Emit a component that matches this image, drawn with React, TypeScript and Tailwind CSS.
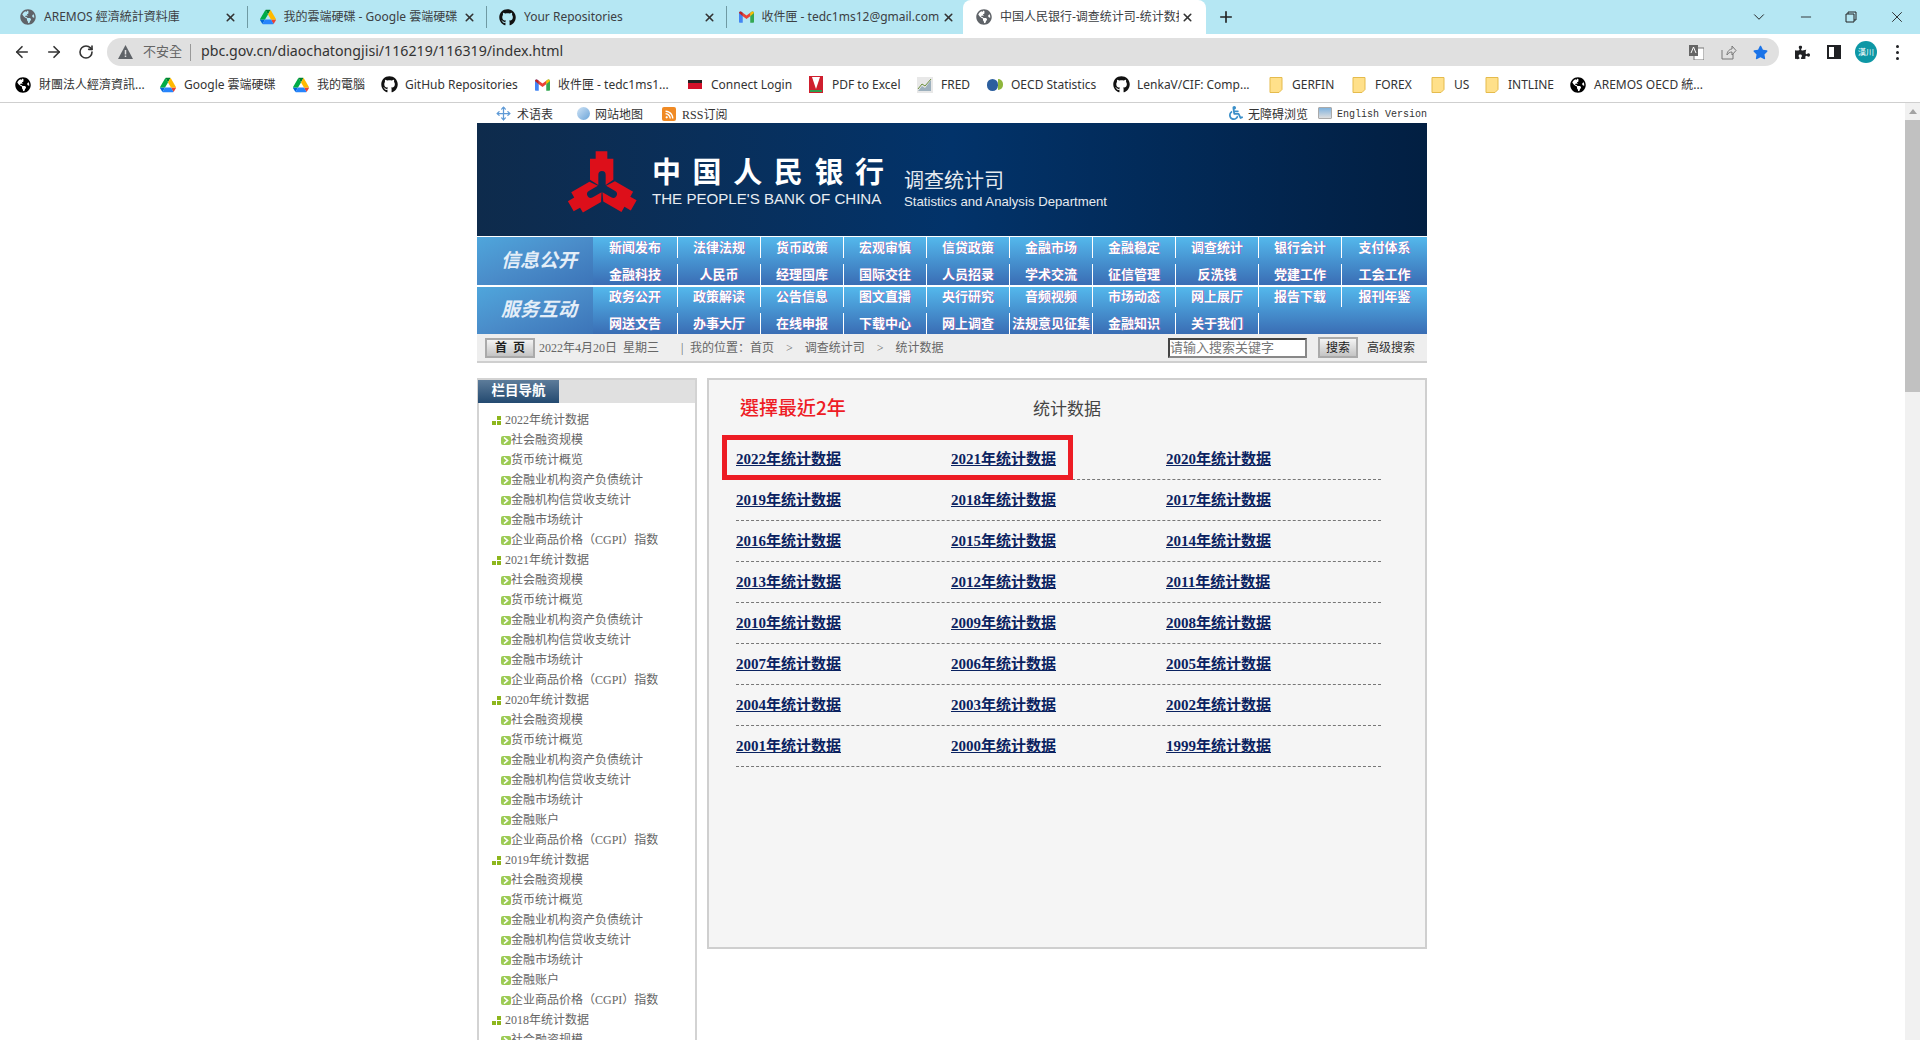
import { ArrowLeft, ArrowRight, RotateCw, ChevronDown, Minus, X, Plus, Move } from 'lucide-react'
import { FaGithub, FaGlobeAmericas, FaPuzzlePiece, FaRss, FaStar, FaWheelchair } from 'react-icons/fa'

const CHROME = "[font-family:'Noto_Sans','Noto_Sans_CJK_TC',sans-serif]"
const PAGE = "[font-family:'Liberation_Serif','Noto_Sans_CJK_SC',serif]"
const ARIAL = "[font-family:'Liberation_Sans','Noto_Sans_CJK_SC',sans-serif]"

function Drive({ size = 16 }: { size?: number }) {
  return (
    <svg width={size} height={size} viewBox="0 0 87.3 78" className="shrink-0">
      <path d="m6.6 66.85 3.85 6.65c.8 1.4 1.95 2.5 3.3 3.3l13.75-23.8h-27.5c0 1.55.4 3.1 1.2 4.5z" fill="#0066da" />
      <path d="m43.65 25-13.75-23.8c-1.35.8-2.5 1.9-3.3 3.3l-25.4 44a9.06 9.06 0 0 0 -1.2 4.5h27.5z" fill="#00ac47" />
      <path d="m73.55 76.8c1.35-.8 2.5-1.9 3.3-3.3l1.6-2.75 7.65-13.25c.8-1.4 1.2-2.95 1.2-4.5h-27.502l5.852 11.5z" fill="#ea4335" />
      <path d="m43.65 25 13.75-23.8c-1.35-.8-2.9-1.2-4.5-1.2h-18.5c-1.6 0-3.15.45-4.5 1.2z" fill="#00832d" />
      <path d="m59.8 53h-32.3l-13.75 23.8c1.35.8 2.9 1.2 4.5 1.2h50.8c1.6 0 3.15-.45 4.5-1.2z" fill="#2684fc" />
      <path d="m73.4 26.5-12.7-22c-.8-1.4-1.95-2.5-3.3-3.3l-13.75 23.8 16.15 28h27.45c0-1.55-.4-3.1-1.2-4.5z" fill="#ffba00" />
    </svg>
  )
}

function Gmail() {
  return (
    <svg width="15" height="12" viewBox="0 0 24 18" className="shrink-0">
      <path d="M0 2.5C0 .5 2.2-.6 3.8.6L6 2.2V18H1.6C.7 18 0 17.3 0 16.4z" fill="#4285f4" />
      <path d="M24 2.5c0-2-2.2-3.1-3.8-1.9L18 2.2V18h4.4c.9 0 1.6-.7 1.6-1.6z" fill="#34a853" />
      <path d="M6 2.2 12 6.7l6-4.5v5.6l-6 4.5-6-4.5z" fill="#ea4335" />
      <path d="M0 2.5 6 7.8V2.2L3.8.6C2.2-.6 0 .5 0 2.5z" fill="#c5221f" />
      <path d="M24 2.5 18 7.8V2.2L20.2.6C21.8-.6 24 .5 24 2.5z" fill="#fbbc04" />
    </svg>
  )
}

function Folder() {
  return (
    <svg width="14" height="16" viewBox="0 0 14 16" className="shrink-0">
      <path d="M1 .5h8l4 0v12l-3 3H1z" fill="#ffe08a" stroke="#e5bb4c" />
    </svg>
  )
}

function Tab({ icon, title }: { icon: React.ReactNode; title: string }) {
  return (
    <div className="flex w-[239.5px] h-[34px] items-center pl-3 pr-[10px] border-r border-[#6f9aa3] [border-image:linear-gradient(transparent_20%,#6f9aa3_20%,#6f9aa3_80%,transparent_80%)_1]">
      {icon}
      <span className="ml-2 flex-1 overflow-hidden whitespace-nowrap text-xs text-[#3c4043]">{title}</span>
      <X size={13} strokeWidth={3} className="ml-[2px] shrink-0 text-[#333]" />
    </div>
  )
}

const bookmarks: { w: string; icon: React.ReactNode; label: string }[] = [
  { w: 'w-[145px]', icon: <FaGlobeAmericas size={16} className="shrink-0 text-black" />, label: '財團法人經濟資訊...' },
  { w: 'w-[133px]', icon: <Drive />, label: 'Google 雲端硬碟' },
  { w: 'w-[88px]', icon: <Drive />, label: '我的電腦' },
  { w: 'w-[153px]', icon: <FaGithub size={17} className="shrink-0 text-[#111]" />, label: 'GitHub Repositories' },
  { w: 'w-[153px]', icon: <Gmail />, label: '收件匣 - tedc1ms1...' },
  {
    w: 'w-[121px]',
    icon: (
      <span className="flex w-[14px] shrink-0 flex-col">
        <span className="h-[3px] bg-[#222]" />
        <span className="h-[6px] bg-[#d3112a]" />
      </span>
    ),
    label: 'Connect Login',
  },
  {
    w: 'w-[109px]',
    icon: (
      <svg width="14" height="17" viewBox="0 0 14 17" className="shrink-0">
        <rect width="14" height="17" fill="#cf1f2e" />
        <path d="M3 1h8L7 13z" fill="#fff" />
        <path d="M1 15h12" stroke="#2e9e4f" strokeWidth="2" />
      </svg>
    ),
    label: 'PDF to Excel',
  },
  {
    w: 'w-[70px]',
    icon: (
      <svg width="16" height="16" viewBox="0 0 16 16" className="shrink-0">
        <rect width="16" height="16" fill="#e8e8e8" />
        <path d="M1 14 5 9l3 2 6-8v11z" fill="#9db0bd" />
        <path d="M1 12 5 7l3 2 6-7" stroke="#6a8f3c" fill="none" />
      </svg>
    ),
    label: 'FRED',
  },
  {
    w: 'w-[126px]',
    icon: (
      <span className="flex w-[16px] shrink-0 items-center">
        <span className="h-[12px] w-[11px] rounded-full bg-[#2c5f9e]" />
        <span className="h-[11px] w-[5px] rounded-r-full bg-[#8fb63c]" />
      </span>
    ),
    label: 'OECD Statistics',
  },
  { w: 'w-[155px]', icon: <FaGithub size={17} className="shrink-0 text-[#111]" />, label: 'LenkaV/CIF: Comp...' },
  { w: 'w-[83px]', icon: <Folder />, label: 'GERFIN' },
  { w: 'w-[79px]', icon: <Folder />, label: 'FOREX' },
  { w: 'w-[54px]', icon: <Folder />, label: 'US' },
  { w: 'w-[86px]', icon: <Folder />, label: 'INTLINE' },
  { w: 'w-[150px]', icon: <FaGlobeAmericas size={16} className="shrink-0 text-black" />, label: 'AREMOS OECD 統...' },
]

const nav1 = [
  '新闻发布', '法律法规', '货币政策', '宏观审慎', '信贷政策', '金融市场', '金融稳定', '调查统计', '银行会计', '支付体系',
  '金融科技', '人民币', '经理国库', '国际交往', '人员招录', '学术交流', '征信管理', '反洗钱', '党建工作', '工会工作',
]
const nav2 = [
  '政务公开', '政策解读', '公告信息', '图文直播', '央行研究', '音频视频', '市场动态', '网上展厅', '报告下载', '报刊年鉴',
  '网送文告', '办事大厅', '在线申报', '下载中心', '网上调查', '法规意见征集', '金融知识', '关于我们', '', '',
]

function NavBand({ label, items, rows }: { label: string; items: string[]; rows: string }) {
  return (
    <div className="flex bg-gradient-to-b from-[#54b8ec] to-[#3a6db4]">
      <div className="flex w-[116px] items-center justify-center bg-gradient-to-br from-[#4fa6dc] via-[#4a8cc9] to-[#3c74b8]">
        <span className={`${PAGE} pl-2 text-[19px] font-bold italic text-[#e4eef8]`}>{label}</span>
      </div>
      <div className={`grid flex-1 grid-cols-[85px_repeat(8,83px)_1fr] gap-y-[6px] ${rows}`}>
        {items.map((t, i) => (
          <div
            key={i}
            className={`flex items-center justify-center whitespace-nowrap text-[13px] font-bold text-white [text-shadow:1px_0_0_#8a5fb0] ${
              i % 10 === 9 || t === '' ? '' : 'border-r border-white'
            }`}
          >
            {t}
          </div>
        ))}
      </div>
    </div>
  )
}

function YearIcon() {
  return (
    <span className="mr-1 grid h-[9px] w-[9px] shrink-0 grid-cols-2 gap-px">
      <span />
      <span className="bg-[#8db61c]" />
      <span className="bg-[#8db61c]" />
      <span className="bg-[#8db61c]" />
    </span>
  )
}

function ItemIcon() {
  return (
    <span className="flex h-[9px] w-[10px] shrink-0 items-center justify-center rounded-[2px] bg-[#9ccb54] text-white">
      <svg width="6" height="7" viewBox="0 0 6 7">
        <path d="M1 .5 4.5 3.5 1 6.5" fill="none" stroke="#fff" strokeWidth="1.6" />
      </svg>
    </span>
  )
}

const base = ['社会融资规模', '货币统计概览', '金融业机构资产负债统计', '金融机构信贷收支统计', '金融市场统计']
const cgpi = '企业商品价格（CGPI）指数'
const tree: { year: string; items: string[] }[] = [
  { year: '2022年统计数据', items: [...base, cgpi] },
  { year: '2021年统计数据', items: [...base, cgpi] },
  { year: '2020年统计数据', items: [...base, '金融账户', cgpi] },
  { year: '2019年统计数据', items: [...base, '金融账户', cgpi] },
  { year: '2018年统计数据', items: [...base] },
]

const years = Array.from({ length: 24 }, (_, i) => 2022 - i)
const rows = Array.from({ length: 8 }, (_, i) => years.slice(i * 3, i * 3 + 3))

export default function App() {
  return (
    <div className={`flex h-[1040px] w-[1920px] flex-col overflow-hidden bg-white ${CHROME}`}>
      {/* tab strip */}
      <div className="flex h-[34px] shrink-0 items-center bg-[#b5e7f3] pl-2">
        <Tab icon={<FaGlobeAmericas size={16} className="shrink-0 text-[#5f6368]" />} title="AREMOS 經濟統計資料庫" />
        <Tab icon={<Drive />} title="我的雲端硬碟 - Google 雲端硬碟" />
        <Tab icon={<FaGithub size={17} className="shrink-0 text-[#111]" />} title="Your Repositories" />
        <Tab icon={<Gmail />} title="收件匣 - tedc1ms12@gmail.com" />
        <div className="-ml-[3px] flex h-[34px] w-[243px] items-center rounded-t-lg bg-white pl-[13px] pr-[12px]">
          <FaGlobeAmericas size={16} className="shrink-0 text-[#5f6368]" />
          <span className="ml-2 flex-1 overflow-hidden whitespace-nowrap text-xs text-[#3c4043]">中国人民银行-调查统计司-统计数据</span>
          <X size={13} strokeWidth={3} className="ml-[2px] shrink-0 text-[#333]" />
        </div>
        <Plus size={18} strokeWidth={2.2} className="ml-[11px] text-[#222]" />
        <div className="ml-auto flex items-center">
          <ChevronDown size={18} strokeWidth={1.3} className="mr-[30px] text-[#222]" />
          <Minus size={16} strokeWidth={1.3} className="mr-[31px] text-[#222]" />
          <svg width="12" height="12" viewBox="0 0 12 12" className="mr-[31px]">
            <path d="M3 3V1h8v8H9M1 3h8v8H1z" fill="none" stroke="#222" />
          </svg>
          <X size={18} strokeWidth={1.2} className="mr-[14px] text-[#222]" />
        </div>
      </div>

      {/* toolbar */}
      <div className="flex h-[32px] shrink-0 items-end bg-white">
        <div className="flex h-[28px] items-center pl-[13px]">
          <ArrowLeft size={18} strokeWidth={2.2} className="text-[#333]" />
          <ArrowRight size={18} strokeWidth={2.2} className="ml-[14px] text-[#333]" />
          <RotateCw size={16} strokeWidth={2.4} className="ml-[15px] text-[#333]" />
        </div>
        <div className="ml-[13px] flex h-[28px] w-[1672px] items-center rounded-full bg-[#e0e0e0] pl-[11px] pr-[11px]">
          <svg width="15" height="14" viewBox="0 0 15 14" className="shrink-0">
            <path d="M7.5 0 15 14H0z" fill="#5f6368" />
            <path d="M7.5 5v4.5M7.5 10.5V12" stroke="#e0e0e0" strokeWidth="1.5" />
          </svg>
          <span className="ml-[10px] -mt-px text-[13px] text-[#666]">不安全</span>
          <span className="ml-2 h-[17px] w-px bg-[#999]" />
          <span className="ml-[10px] -mt-[2px] text-[14.2px] text-[#333]">pbc.gov.cn/diaochatongjisi/116219/116319/index.html</span>
          <div className="ml-auto flex items-center">
            <svg width="15" height="15" viewBox="0 0 15 15">
              <rect x="5" y="3" width="10" height="12" fill="#fff" stroke="#777" />
              <rect width="9" height="11" fill="#666" />
              <path d="M2 8 4.500 2 7 8" stroke="#fff" fill="none" />
            </svg>
            <svg width="16" height="15" viewBox="0 0 16 15" className="ml-[17px]">
              <path d="M1 5v9h11V9M6 10c0-4 3-6 5-6V1l4 4.500-4 4.500V7c-2 0-4 1-5 3z" fill="none" stroke="#777" />
            </svg>
            <FaStar size={15} className="ml-[16px] text-[#1a73e8]" />
          </div>
        </div>
        <div className="flex h-[28px] items-center">
          <FaPuzzlePiece size={15} className="ml-[16px] text-[#202124]" />
          <span className="ml-[17px] flex h-[14px] w-[14px] items-center justify-end border-2 border-[#202124] bg-white">
            <span className="h-full w-[5px] bg-[#202124]" />
          </span>
          <span className="ml-[14px] flex h-[22px] w-[22px] items-center justify-center rounded-full bg-[#0d97a5] text-[8px] text-white">
            漢川
          </span>
          <span className="ml-[19px] flex flex-col gap-[3px]">
            <span className="h-[3px] w-[3px] rounded-full bg-[#202124]" />
            <span className="h-[3px] w-[3px] rounded-full bg-[#202124]" />
            <span className="h-[3px] w-[3px] rounded-full bg-[#202124]" />
          </span>
        </div>
      </div>

      {/* bookmarks */}
      <div className="flex h-[37px] shrink-0 items-center border-b border-[#cfcfcf] bg-white pl-[15px] pt-px">
        {bookmarks.map((b) => (
          <div key={b.label} className={`flex ${b.w} shrink-0 items-center gap-2 whitespace-nowrap text-xs text-[#333]`}>
            <span className="flex w-4 shrink-0 justify-center">{b.icon}</span>
            <span>{b.label}</span>
          </div>
        ))}
      </div>

      <div className="flex min-h-0 flex-1">
        {/* page */}
        <div className={`min-w-0 flex-1 ${PAGE}`}>
          <div className="ml-[477px] w-[950px]">
            <div className="flex h-[20px] items-end text-xs text-[#333]">
              <Move size={15} className="ml-[19px] mb-[2px] text-[#5f9ad6]" />
              <span className="ml-[6px]">术语表</span>
              <span className="ml-[24px] mb-[3px] h-[13px] w-[13px] rounded-full bg-gradient-to-br from-[#cfe3f5] to-[#6aa4d8]" />
              <span className="ml-[5px]">网站地图</span>
              <span className="ml-[19px] mb-[2px] flex h-[14px] w-[14px] items-center justify-center rounded-[2px] bg-[#f08a24] text-white">
                <FaRss size={9} />
              </span>
              <span className="ml-[6px]">RSS订阅</span>
              <FaWheelchair size={14} className="ml-auto mb-[3px] text-[#3a8fc9]" />
              <span className="ml-[5px]">无障碍浏览</span>
              <span className="ml-[10px] mb-[4px] h-[12px] w-[14px] rounded-[1px] border border-[#aaa] bg-gradient-to-b from-[#7fb2dd] to-[#ddd]" />
              <span className="ml-[5px] [font-family:'Liberation_Mono',monospace] text-[10px] leading-[16px]">English Version</span>
            </div>

            {/* banner */}
            <div className="flex h-[113px] bg-gradient-to-r from-[#0e2b4c] via-[#02336a] to-[#021f42] text-white">
              <svg width="80" height="70" viewBox="40 20 240 210" className="ml-[86px] mt-[24px] shrink-0">
                <g fill="#dd0f1a">
                  {[0, 120, 240].map((a) => (
                    <path
                      key={a}
                      transform={`rotate(${a} 157 142)`}
                      d="M138 33H173V55H191V118L168 134V104Q168 92 157 92Q146 92 146 104V134L121 118V55H138Z"
                    />
                  ))}
                </g>
              </svg>
              <div className="ml-[9px] mt-[35px] w-[240px]">
                <div className={`${ARIAL} flex h-[30px] w-[232px] justify-between text-[29px] font-bold leading-[30px]`}>
                  <span>中</span>
                  <span>国</span>
                  <span>人</span>
                  <span>民</span>
                  <span>银</span>
                  <span>行</span>
                </div>
                <div className={`${ARIAL} mt-[2px] whitespace-nowrap text-[15.1px] leading-[18px] text-[#e8edf2]`}>THE PEOPLE'S BANK OF CHINA</div>
              </div>
              <div className={`${ARIAL} ml-[12px] mt-[46px] whitespace-nowrap`}>
                <div className="text-[20px] leading-[25px] text-[#e6ebf0]">调查统计司</div>
                <div className="text-[13.2px] leading-[16px] text-[#e6ebf0]">Statistics and Analysis Department</div>
              </div>
            </div>

            {/* nav */}
            <div className={ARIAL}>
              <div className="pt-px">
                <NavBand label="信息公开" items={nav1} rows="grid-rows-[21px_21px]" />
              </div>
              <div className="pt-[2px]">
                <NavBand label="服务互动" items={nav2} rows="grid-rows-[20px_21px]" />
              </div>
            </div>

            {/* breadcrumb */}
            <div className={`${PAGE} flex h-[29px] items-center border-b-2 border-[#cfcfcf] bg-[#eeeeee] pl-2 pr-3 text-xs text-[#666]`}>
              <span className="flex h-[20px] w-[50px] items-center justify-center border-2 border-[#aaa] bg-gradient-to-b from-[#f4f4f4] to-[#c4c4c4] font-bold text-[#222]">
                首&nbsp;&nbsp;页
              </span>
              <span className="ml-[4px] w-[142px]">2022年4月20日&nbsp;&nbsp;星期三</span>
              <span className="w-[9px]">|</span>
              <span>我的位置：首页</span>
              <span className="mx-[12px] font-light">&gt;</span>
              <span>调查统计司</span>
              <span className="mx-[12px] font-light">&gt;</span>
              <span>统计数据</span>
              <span className="ml-auto flex h-[20px] w-[139px] items-center border-2 border-b-[#888] border-l-[#444] border-r-[#888] border-t-[#444] bg-white text-[13px] text-[#777]">
                请输入搜索关键字
              </span>
              <span className="ml-[11px] flex h-[21px] w-[40px] items-center justify-center border-2 border-[#aaa] bg-gradient-to-b from-[#f4f4f4] to-[#c4c4c4] text-[#222]">
                搜索
              </span>
              <span className="ml-[9px] text-[#333]">高级搜索</span>
            </div>

            <div className="mt-[15px] flex gap-[10px]">
              {/* sidebar */}
              <div className="w-[220px] shrink-0 border-x-2 border-t-2 border-[#d3d3d3]">
                <div className="h-[23px] bg-[#e0e0e0]">
                  <div className={`${ARIAL} -ml-px flex h-[23px] w-[81px] items-center justify-center bg-gradient-to-b from-[#5d7c9a] to-[#234a70] text-[13.5px] font-bold text-white`}>
                    栏目导航
                  </div>
                </div>
                <div className="pl-[13px] pt-[7px] text-xs text-[#666]">
                  {tree.map((y) => (
                    <div key={y.year}>
                      <div className="flex h-5 items-center">
                        <YearIcon />
                        <span>{y.year}</span>
                      </div>
                      {y.items.map((t) => (
                        <div key={t} className="flex h-5 items-center whitespace-nowrap pl-[9px]">
                          <ItemIcon />
                          <span>{t}</span>
                        </div>
                      ))}
                    </div>
                  ))}
                </div>
              </div>

              {/* main panel */}
              <div className="relative h-[571px] flex-1 border-2 border-[#cfcfcf] bg-[#f5f5f5]">
                <div className={`${ARIAL} pt-[17px] text-center text-[17px] leading-[26px] text-[#444]`}>统计数据</div>
                <div className="absolute left-[31px] top-[14px] [font-family:'Noto_Sans_CJK_TC',sans-serif] text-[19px] font-medium leading-[26px] text-[#ee1c25]">
                  選擇最近2年
                </div>
                <div className="absolute left-[13px] top-[55px] h-[45px] w-[351px] border-[5px] border-[#ed1c24]" />
                <div className="ml-[27px] mt-[16px] w-[645px]">
                  {rows.map((r) => (
                    <div key={r[0]} className="grid h-[41px] grid-cols-3 items-center border-b border-dashed border-[#777]">
                      {r.map((y) => (
                        <a key={y} className="text-[15px] font-bold text-[#0a2260] underline">
                          {y}年统计数据
                        </a>
                      ))}
                    </div>
                  ))}
                </div>
              </div>
            </div>
          </div>
        </div>

        {/* scrollbar */}
        <div className="flex w-[15px] shrink-0 flex-col items-center bg-[#f1f1f1] pt-[6px]">
          <span className="h-0 w-0 border-x-[4px] border-b-[5px] border-x-transparent border-b-[#a3a3a3]" />
          <span className="mt-[6px] h-[272px] w-full bg-[#c1c1c1]" />
        </div>
      </div>
    </div>
  )
}
